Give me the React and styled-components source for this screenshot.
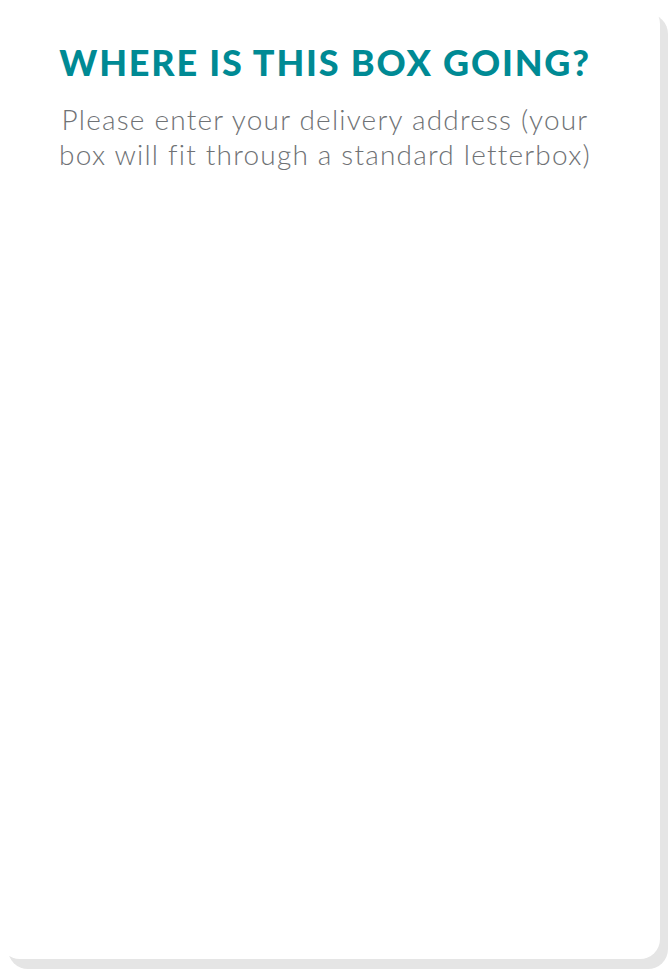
import React from 'react';
import styled, { createGlobalStyle } from 'styled-components';

const GlobalStyle = createGlobalStyle`
  html, body {
    margin: 0;
    padding: 0;
    background: #ffffff;
  }
  body {
    font-family: Lato, "Open Sans", sans-serif;
    overflow: hidden;
  }
`;

const Page = styled.div`
  width: 668px;
  height: 972px;
  padding-top: 4px;
  box-sizing: border-box;
`;

const Card = styled.section`
  width: 660px;
  height: 955px;
  box-sizing: border-box;
  background: #ffffff;
  border-radius: 20px;
  box-shadow: 8px 10px 0 #e5e5e5;
  padding: 36px 40px 0 30px;
  display: flex;
  flex-direction: column;
  align-items: center;
`;

const Title = styled.h1`
  margin: 0;
  font-family: Lato, sans-serif;
  font-weight: 900;
  font-size: 36px;
  line-height: 44px;
  letter-spacing: 1.8px;
  color: #008a94;
  text-transform: uppercase;
  text-align: center;
`;

const Subtitle = styled.p`
  margin: 18px 0 0;
  max-width: 545px;
  font-family: Lato, sans-serif;
  font-weight: 300;
  font-size: 28px;
  line-height: 35px;
  letter-spacing: 1.2px;
  color: #6f7275;
  text-align: center;
`;

const App = () => {
  return (
    <Page>
      <GlobalStyle />
      <Card>
        <Title>Where is this box going?</Title>
        <Subtitle>
          Please enter your delivery address (your box will fit through a
          standard letterbox)
        </Subtitle>
      </Card>
    </Page>
  );
};

export default App;
